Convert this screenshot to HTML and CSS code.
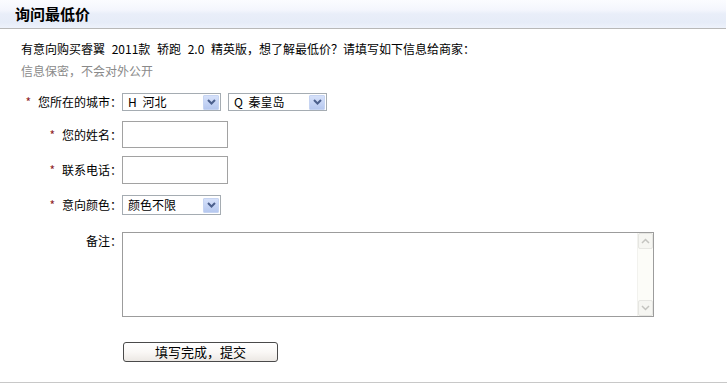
FILE: index.html
```html
<!DOCTYPE html>
<html lang="zh-CN">
<head>
<meta charset="utf-8">
<title>询问最低价</title>
<link rel="stylesheet" href="styles.css">
</head>
<body>
<div class="panel">
  <div class="header"><h2 class="title">询问最低价</h2></div>
  <div class="intro">
    <p class="intro-line">有意向购买睿翼 2011款 轿跑 2.0 精英版，想了解最低价？请填写如下信息给商家：</p>
    <p class="intro-line muted">信息保密，不会对外公开</p>
  </div>
  <form class="form">
    <div class="row row-city">
      <label class="label"><span class="req">*</span>您所在的城市：</label>
      <div class="field pair">
        <div class="select">
          <span class="select-text">H 河北</span>
          <span class="select-btn"><svg width="9" height="6" viewBox="0 0 9 6"><path d="M1 1 L4.5 4.5 L8 1" fill="none" stroke="#4b5f8c" stroke-width="2"/></svg></span>
        </div>
        <div class="select">
          <span class="select-text">Q 秦皇岛</span>
          <span class="select-btn"><svg width="9" height="6" viewBox="0 0 9 6"><path d="M1 1 L4.5 4.5 L8 1" fill="none" stroke="#4b5f8c" stroke-width="2"/></svg></span>
        </div>
      </div>
    </div>
    <div class="row row-name">
      <label class="label"><span class="req">*</span>您的姓名：</label>
      <div class="field"><input class="text-input" type="text"></div>
    </div>
    <div class="row row-phone">
      <label class="label"><span class="req">*</span>联系电话：</label>
      <div class="field"><input class="text-input tall" type="text"></div>
    </div>
    <div class="row row-color">
      <label class="label"><span class="req">*</span>意向颜色：</label>
      <div class="field">
        <div class="select select-color">
          <span class="select-text">颜色不限</span>
          <span class="select-btn"><svg width="9" height="6" viewBox="0 0 9 6"><path d="M1 1 L4.5 4.5 L8 1" fill="none" stroke="#4b5f8c" stroke-width="2"/></svg></span>
        </div>
      </div>
    </div>
    <div class="row row-remark">
      <label class="label label-top">备注：</label>
      <div class="field">
        <div class="textbox">
          <textarea class="textarea"></textarea>
          <div class="scrollbar">
            <span class="sb-btn"><svg width="9" height="6" viewBox="0 0 9 6"><path d="M1 5 L4.5 1.5 L8 5" fill="none" stroke="#c4c4c0" stroke-width="1.5"/></svg></span>
            <span class="sb-track"></span>
            <span class="sb-btn"><svg width="9" height="6" viewBox="0 0 9 6"><path d="M1 1 L4.5 4.5 L8 1" fill="none" stroke="#c4c4c0" stroke-width="1.5"/></svg></span>
          </div>
        </div>
      </div>
    </div>
    <div class="row row-submit">
      <span class="label"></span>
      <div class="field"><button class="submit" type="button">填写完成，提交</button></div>
    </div>
  </form>
  <div class="footer-line"></div>
</div>
</body>
</html>
```

FILE: styles.css
```css
* { box-sizing: border-box; }
html, body { margin: 0; padding: 0; background: #fff; }
body {
  font-family: "Noto Sans CJK SC", "Liberation Sans", sans-serif;
  font-size: 12px;
  color: #111;
  width: 727px;
  height: 390px;
  overflow: hidden;
}
.header {
  height: 29px;
  border-bottom: 1px solid #b8b8b8;
  background: linear-gradient(#fbfcff 0%, #f4f6fd 35%, #e9eef9 50%, #e6ecf8 80%, #eef2fb 100%);
  padding-left: 15px;
  width: 726px;
}
.title {
  margin: 0;
  font-size: 15px;
  font-weight: bold;
  line-height: 27px;
  color: #000;
}
.intro { padding-left: 21px; margin-top: 9px; }
.intro-line { margin: 0; line-height: 22px; white-space: nowrap; color: #000; word-spacing: 4px; }
.muted { color: #8a8a8a; }
.form { display: flex; flex-direction: column; }
.row { display: flex; align-items: center; }
.row-city { margin-top: 11px; }
.row-name { margin-top: 10px; }
.row-phone { margin-top: 8px; }
.row-color { margin-top: 11px; }
.row-remark { margin-top: 17px; align-items: flex-start; }
.row-submit { margin-top: 25px; }
.label {
  width: 122px;
  flex: none;
  text-align: right;
  white-space: nowrap;
  line-height: 16px;
  color: #000;
}
.label-top { padding-top: 1px; }
.req { color: #8e2328; margin-right: 7px; }
.field { display: flex; }
.pair { gap: 7px; }
.select {
  width: 99px;
  height: 18px;
  border: 1px solid #a5acb2;
  background: #fff;
  display: flex;
  align-items: center;
  justify-content: space-between;
  padding-left: 5px;
  padding-right: 1px;
}
.select-color { height: 20px; }
.select-text { line-height: 14px; white-space: nowrap; word-spacing: 3px; color: #000; }
.select-btn {
  width: 16px;
  height: 15px;
  background: linear-gradient(#d6e1fa, #b6c8ef);
  border: 1px solid #c6d4f2;
  border-radius: 1px;
  display: flex;
  align-items: center;
  justify-content: center;
}
.text-input {
  width: 106px;
  height: 27px;
  border: 1px solid #a2a2a2;
  margin: 0;
  padding: 2px 4px;
  font: inherit;
  background: #fff;
}
.text-input.tall { height: 28px; }
.textbox {
  width: 532px;
  height: 85px;
  border: 1px solid #9c9c9c;
  display: flex;
  background: #fff;
}
.textarea {
  flex: 1;
  border: 0;
  margin: 0;
  padding: 2px;
  resize: none;
  font: inherit;
  outline: none;
  overflow: hidden;
}
.scrollbar {
  width: 16px;
  flex: none;
  display: flex;
  flex-direction: column;
  background: #fcfcf8;
  border-left: 1px solid #f2f2ee;
}
.sb-btn {
  height: 16px;
  flex: none;
  display: flex;
  align-items: center;
  justify-content: center;
  background: #f6f6f2;
  border: 1px solid #e6e6e2;
  border-radius: 2px;
}
.sb-track { flex: 1; }
.submit {
  margin: 0 0 0 1px;
  width: 155px;
  height: 20px;
  border: 1px solid #4a4a4a;
  border-radius: 3px;
  background: linear-gradient(#ffffff 0%, #faf8f6 50%, #ece8e4 100%);
  font-family: "Noto Sans CJK SC", sans-serif;
  font-size: 13px;
  line-height: 16px;
  color: #000;
  padding: 0;
}
.footer-line {
  margin-top: 20px;
  border-top: 1px solid #c8c8c8;
  width: 727px;
}
```
